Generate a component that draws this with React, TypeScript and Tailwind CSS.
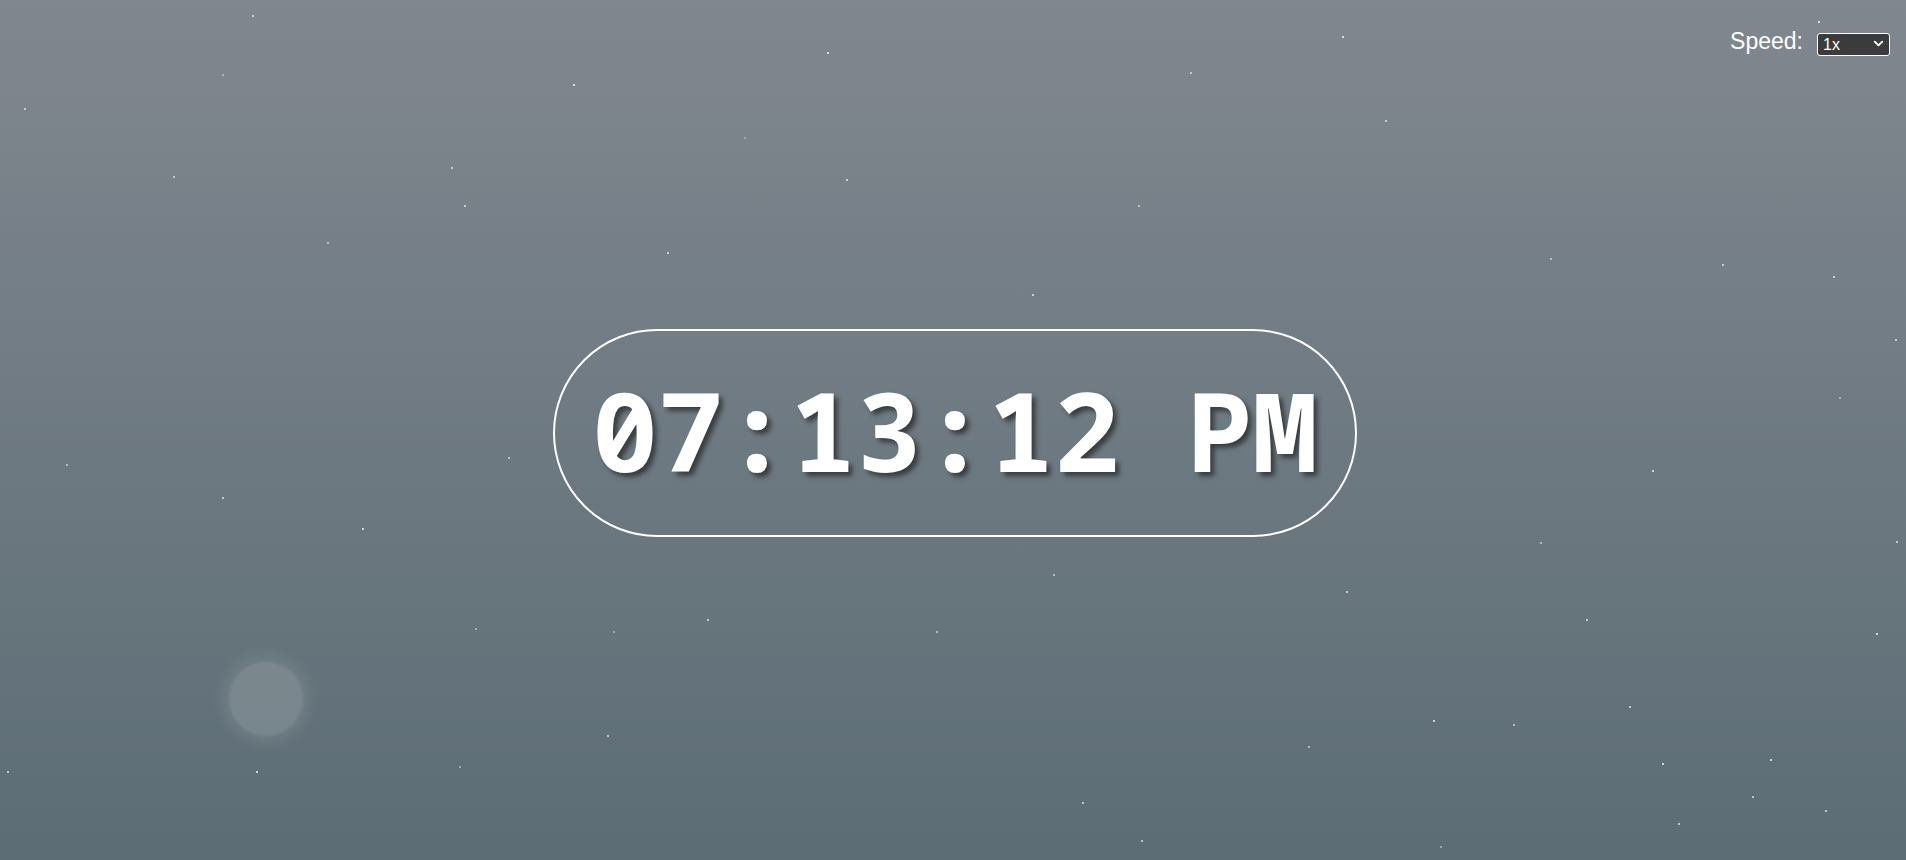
import React, { useState } from 'react'
import { ChevronDown } from 'lucide-react'

// star field, placed on the canvas at fixed spots
const stars: [number, number, number][] = [
  [252, 15, 0.6], [827, 52, 0.7], [1342, 36, 0.7], [222, 74, 0.4], [573, 84, 0.7],
  [24, 108, 0.6], [1190, 72, 0.5], [1385, 120, 0.6], [744, 137, 0.3], [451, 167, 0.6],
  [173, 176, 0.5], [846, 179, 0.6], [464, 205, 0.6], [1138, 205, 0.5], [327, 242, 0.5],
  [667, 252, 0.6], [1550, 258, 0.5], [1722, 264, 0.6], [1833, 276, 0.6], [1032, 294, 0.6],
  [1895, 339, 0.6], [1839, 397, 0.4], [508, 457, 0.5], [66, 464, 0.5], [1652, 470, 0.7],
  [222, 497, 0.6], [362, 528, 0.7], [1540, 542, 0.5], [1896, 541, 0.6], [1053, 574, 0.5],
  [1346, 591, 0.6], [707, 619, 0.6], [1586, 619, 0.6], [475, 628, 0.4], [936, 631, 0.5],
  [613, 631, 0.4], [1876, 633, 0.7], [1629, 706, 0.6], [1433, 720, 0.7], [1513, 724, 0.5],
  [607, 735, 0.6], [1308, 746, 0.5], [1770, 759, 0.7], [1662, 763, 0.7], [7, 771, 0.6],
  [256, 771, 0.7], [459, 766, 0.4], [1752, 796, 0.6], [1825, 810, 0.6], [1678, 823, 0.6],
  [1082, 802, 0.6], [1141, 840, 0.6], [1440, 846, 0.4], [1818, 21, 0.7],
]

const SpeedControl = () => {
  const [speed, setSpeed] = useState('1')
  return (
    <div className="absolute top-[24px] right-4 flex items-center gap-[14px]">
      <label className="pb-[5px] text-[23px] text-white font-['Liberation_Sans',Arial,sans-serif]">Speed:</label>
      <div className="relative">
        <select
          value={speed}
          onChange={(e) => setSpeed(e.target.value)}
          className="appearance-none w-[73px] h-[23px] rounded-[3px] border-[1.5px] border-white bg-[#3b3b3b] pl-[5px] text-[16px] leading-none text-white font-['Liberation_Sans',Arial,sans-serif] outline-none"
        >
          <option value="1">1x</option>
          <option value="2">2x</option>
          <option value="5">5x</option>
          <option value="10">10x</option>
        </select>
        <ChevronDown className="pointer-events-none absolute right-[4px] top-[4px] w-[15px] h-[15px] text-white" strokeWidth={3} />
      </div>
    </div>
  )
}

export default function App() {
  return (
    <div className="relative h-screen w-full overflow-hidden bg-linear-to-b from-[#81878f] to-[#5c6d75]">
      {stars.map(([x, y, o], i) => (
        <div
          key={i}
          className="absolute w-[2px] h-[2px] bg-white"
          style={{ left: x, top: y, opacity: o }}
        />
      ))}

      {/* moon */}
      <div className="absolute left-[229px] top-[662px] w-[74px] h-[74px] rounded-full bg-white/15 blur-[1px] shadow-[0_0_16px_6px_rgba(255,255,255,0.1)]" />

      <SpeedControl />

      <div className="flex h-full items-center justify-center pl-[4px] pt-[5px]">
        <div className="rounded-full border-2 border-white px-[37px] pt-[34px] pb-[42px]">
          <span className="block whitespace-pre text-[110px] leading-[128px] font-bold text-white font-['Noto_Sans_Mono','DejaVu_Sans_Mono',monospace] [text-shadow:4px_4px_5px_rgba(0,0,0,0.5)]">
            07:13:12 PM
          </span>
        </div>
      </div>
    </div>
  )
}
